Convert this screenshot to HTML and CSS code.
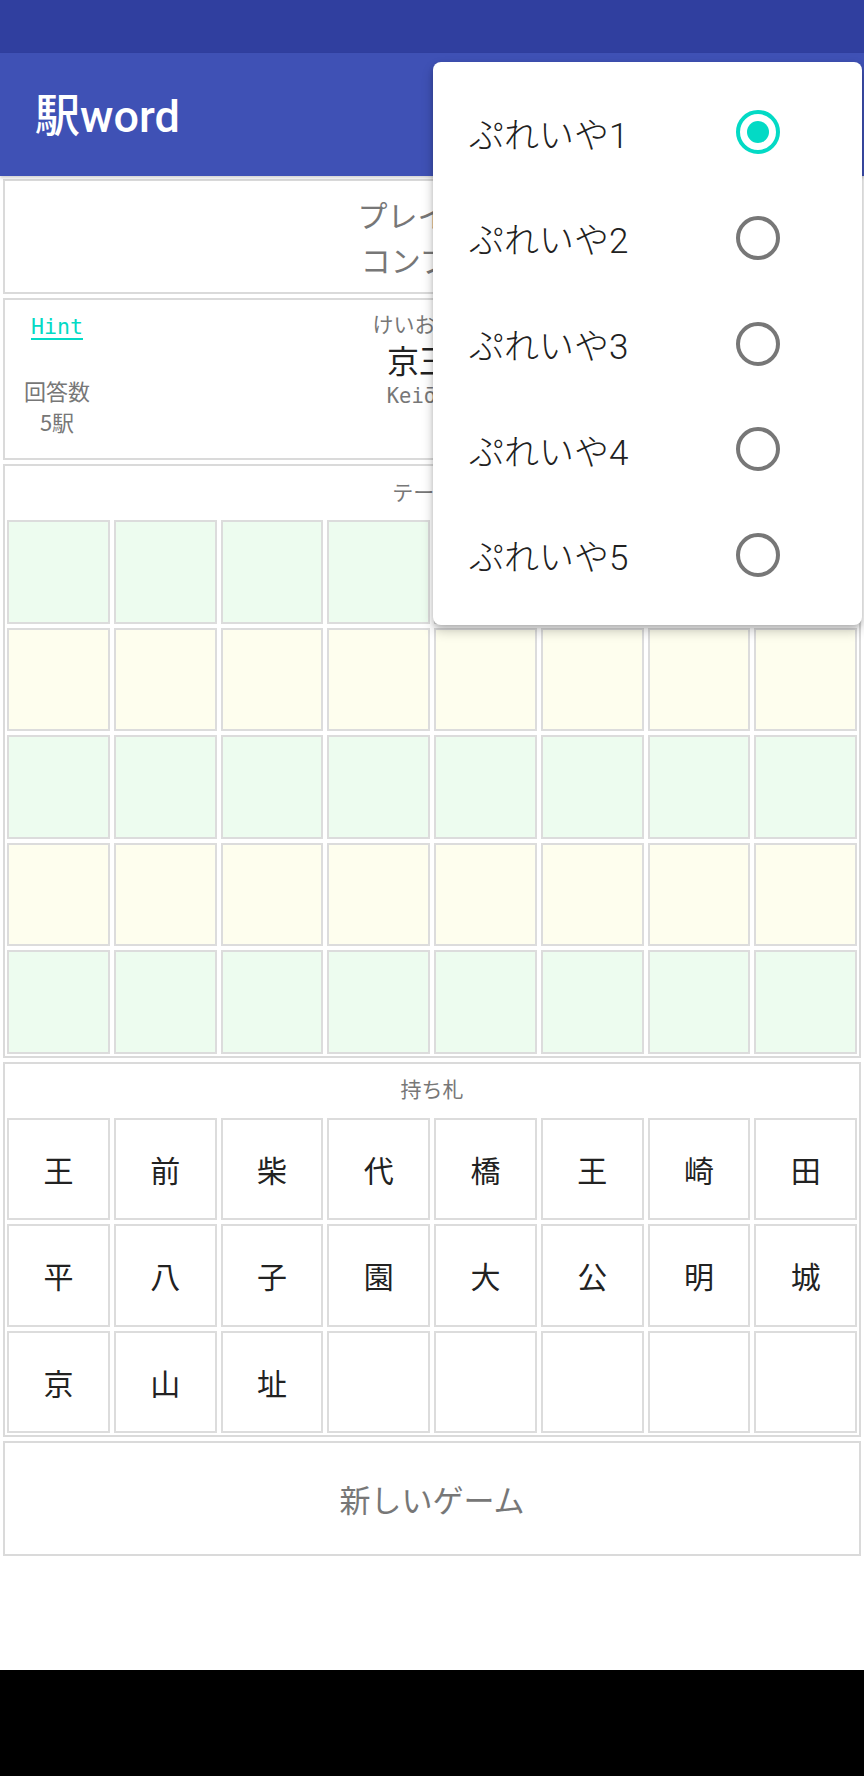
FILE: index.html
```html
<!DOCTYPE html>
<html lang="ja">
<head>
<meta charset="utf-8">
<title>駅word</title>
<link rel="stylesheet" href="styles.css">
</head>
<body>
<div class="phone">
  <div class="status-bar"></div>
  <header class="app-bar"><h1 class="app-title">駅word</h1></header>
  <main class="content">
    <section class="box info">
      <p class="info-line">プレイヤー</p>
      <p class="info-line">コンプ 0駅</p>
    </section>
    <section class="box hint-box">
      <div class="hint-left">
        <a class="hint-link">Hint</a>
        <div class="count first">回答数</div>
        <div class="count">5駅</div>
      </div>
      <div class="hint-center">
        <div class="kana">けいおうはちおうじ</div>
        <div class="kanji">京王八王子</div>
        <div class="roman">Keiō-Hachiōji</div>
      </div>
    </section>
    <section class="box board">
      <div class="box-label">テーマ 1</div>
      <div class="grid">
        <div class="cell green"></div><div class="cell green"></div><div class="cell green"></div><div class="cell green"></div><div class="cell green"></div><div class="cell green"></div><div class="cell green"></div><div class="cell green"></div>
        <div class="cell ivory"></div><div class="cell ivory"></div><div class="cell ivory"></div><div class="cell ivory"></div><div class="cell ivory"></div><div class="cell ivory"></div><div class="cell ivory"></div><div class="cell ivory"></div>
        <div class="cell green"></div><div class="cell green"></div><div class="cell green"></div><div class="cell green"></div><div class="cell green"></div><div class="cell green"></div><div class="cell green"></div><div class="cell green"></div>
        <div class="cell ivory"></div><div class="cell ivory"></div><div class="cell ivory"></div><div class="cell ivory"></div><div class="cell ivory"></div><div class="cell ivory"></div><div class="cell ivory"></div><div class="cell ivory"></div>
        <div class="cell green"></div><div class="cell green"></div><div class="cell green"></div><div class="cell green"></div><div class="cell green"></div><div class="cell green"></div><div class="cell green"></div><div class="cell green"></div>
      </div>
    </section>
    <section class="box hand">
      <div class="box-label">持ち札</div>
      <div class="grid">
        <div class="cell tile">王</div><div class="cell tile">前</div><div class="cell tile">柴</div><div class="cell tile">代</div><div class="cell tile">橋</div><div class="cell tile">王</div><div class="cell tile">崎</div><div class="cell tile">田</div>
        <div class="cell tile">平</div><div class="cell tile">八</div><div class="cell tile">子</div><div class="cell tile">園</div><div class="cell tile">大</div><div class="cell tile">公</div><div class="cell tile">明</div><div class="cell tile">城</div>
        <div class="cell tile">京</div><div class="cell tile">山</div><div class="cell tile">址</div><div class="cell tile"></div><div class="cell tile"></div><div class="cell tile"></div><div class="cell tile"></div><div class="cell tile"></div>
      </div>
    </section>
    <button class="box new-game">新しいゲーム</button>
  </main>
  <nav class="nav-bar"></nav>

  <div class="menu">
    <div class="menu-item"><span class="menu-text">ぷれいや1</span><span class="radio checked"></span></div>
    <div class="menu-item"><span class="menu-text">ぷれいや2</span><span class="radio"></span></div>
    <div class="menu-item"><span class="menu-text">ぷれいや3</span><span class="radio"></span></div>
    <div class="menu-item"><span class="menu-text">ぷれいや4</span><span class="radio"></span></div>
    <div class="menu-item"><span class="menu-text">ぷれいや5</span><span class="radio"></span></div>
  </div>
</div>
</body>
</html>
```

FILE: styles.css
```css
* { box-sizing: border-box; }

html, body {
  margin: 0;
  padding: 0;
  background: #ffffff;
}

body {
  font-family: "Roboto", "Noto Sans CJK JP", sans-serif;
}

.phone {
  position: relative;
  width: 864px;
  height: 1776px;
  display: flex;
  flex-direction: column;
  overflow: hidden;
  background: #ffffff;
}

.status-bar {
  height: 53px;
  background: #303f9f;
  flex: none;
}

.app-bar {
  height: 123px;
  background: #3f51b5;
  flex: none;
  display: flex;
  align-items: center;
  padding-left: 35px;
  box-shadow: 0 2px 3px rgba(0, 0, 0, 0.18);
  position: relative;
  z-index: 1;
}

.app-title {
  margin: 0;
  color: #ffffff;
  font-family: "Roboto", "Noto Sans CJK JP", sans-serif;
  font-weight: 500;
  font-size: 45px;
  line-height: 1;
  padding-top: 4px;
}

.content {
  flex: 1;
  padding: 3px 3px 0;
  display: flex;
  flex-direction: column;
  gap: 4px;
}

.box {
  border: 2px solid #dadada;
  background: #ffffff;
}

.info {
  height: 115px;
  display: flex;
  flex-direction: column;
  justify-content: center;
  align-items: center;
}

.info-line {
  margin: 0;
  font-family: "Noto Sans CJK JP", sans-serif;
  font-size: 30px;
  line-height: 45px;
  color: #777777;
}

.hint-box {
  height: 162px;
  display: flex;
}

.hint-left {
  width: 104px;
  display: flex;
  flex-direction: column;
  align-items: center;
  padding-top: 12px;
}

.hint-link {
  font-family: "DejaVu Sans Mono", monospace;
  font-size: 21.6px;
  line-height: 30px;
  color: #03dac5;
  text-decoration: underline;
  text-underline-offset: 4px;
}

.count {
  font-family: "Noto Sans CJK JP", sans-serif;
  font-size: 22px;
  line-height: 31px;
  color: #777777;
}

.count.first {
  margin-top: 33px;
}

.hint-center {
  flex: 1;
  margin-right: 34px;
  display: flex;
  flex-direction: column;
  align-items: center;
  padding-top: 8px;
}

.kana {
  font-family: "Noto Sans CJK JP", sans-serif;
  font-size: 21px;
  line-height: 30px;
  color: #777777;
}

.kanji {
  font-family: "Noto Sans CJK JP", sans-serif;
  font-size: 32px;
  line-height: 42px;
  color: #222222;
}

.roman {
  font-family: "DejaVu Sans Mono", monospace;
  font-size: 20.5px;
  line-height: 32px;
  color: #777777;
}

.box-label {
  height: 52px;
  display: flex;
  align-items: center;
  justify-content: center;
  font-family: "Noto Sans CJK JP", sans-serif;
  font-size: 21px;
  color: #777777;
  padding-bottom: 3px;
}

.grid {
  display: grid;
  grid-template-columns: repeat(8, 1fr);
}

.cell {
  margin: 2px;
  height: 103.5px;
  border: 2px solid #dcdcdc;
}

.hand .cell {
  height: 102.5px;
}

.green { background: #edfcef; }
.ivory { background: #fefeee; }

.tile {
  background: #ffffff;
  display: flex;
  align-items: center;
  justify-content: center;
  font-family: "Noto Sans CJK JP", sans-serif;
  font-size: 30px;
  color: #222222;
}

.new-game {
  height: 115px;
  width: 100%;
  font-family: "Noto Sans CJK JP", sans-serif;
  font-size: 31px;
  color: #777777;
  padding: 0;
  cursor: pointer;
}

.nav-bar {
  height: 106px;
  background: #000000;
  flex: none;
}

/* popup menu */
.menu {
  position: absolute;
  top: 62px;
  left: 433px;
  width: 429px;
  padding: 17.6px 0;
  background: #ffffff;
  border-radius: 8px;
  box-shadow: 0 6px 12px rgba(0, 0, 0, 0.22), 0 2px 5px rgba(0, 0, 0, 0.14);
  z-index: 10;
}

.menu-item {
  height: 105.6px;
  display: flex;
  align-items: center;
  padding-left: 36px;
}

.menu-text {
  width: 267px;
  font-family: "Roboto", "Noto Sans CJK JP", sans-serif;
  font-weight: 300;
  font-size: 35px;
  color: #212121;
}

.radio {
  width: 44px;
  height: 44px;
  border-radius: 50%;
  border: 4.2px solid #777777;
  display: flex;
  align-items: center;
  justify-content: center;
}

.radio.checked {
  border-color: #03dac5;
}

.radio.checked::after {
  content: "";
  width: 22px;
  height: 22px;
  border-radius: 50%;
  background: #03dac5;
}
```
